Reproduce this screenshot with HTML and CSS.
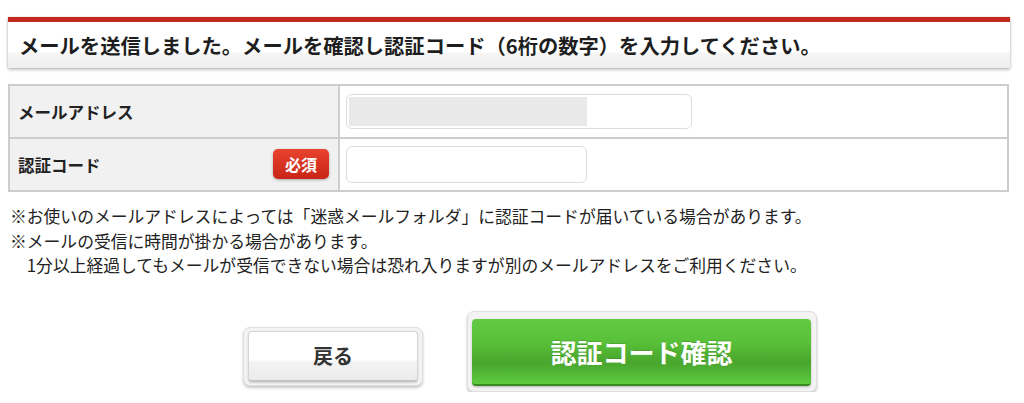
FILE: index.html
```html
<!DOCTYPE html>
<html lang="ja">
<head>
<meta charset="utf-8">
<title>認証コード確認</title>
<link rel="stylesheet" href="styles.css">
</head>
<body>
<div class="page">
  <div class="notice">メールを送信しました。メールを確認し認証コード（6桁の数字）を入力してください。</div>

  <table class="form">
    <tr class="row">
      <th class="label-cell"><div class="label"><span>メールアドレス</span></div></th>
      <td class="field-cell"><div class="input input-email"><span class="masked"></span></div></td>
    </tr>
    <tr class="row">
      <th class="label-cell"><div class="label"><span>認証コード</span><span class="badge">必須</span></div></th>
      <td class="field-cell"><div class="input input-code"></div></td>
    </tr>
  </table>

  <div class="notes">
    <p>※お使いのメールアドレスによっては「迷惑メールフォルダ」に認証コードが届いている場合があります。</p>
    <p>※メールの受信に時間が掛かる場合があります。</p>
    <p>　1分以上経過してもメールが受信できない場合は恐れ入りますが別のメールアドレスをご利用ください。</p>
  </div>

  <div class="actions">
    <div class="frame frame-back"><div class="btn btn-back">戻る</div></div>
    <div class="frame frame-primary"><div class="btn btn-primary">認証コード確認</div></div>
  </div>
</div>
</body>
</html>
```

FILE: styles.css
```css
* { box-sizing: border-box; }

html, body {
  margin: 0;
  padding: 0;
  background: #fff;
}

body {
  font-family: "Noto Sans CJK JP", "Noto Sans", sans-serif;
  color: #222;
}

.page {
  width: 1002px;
  margin-left: 8px;
  padding-top: 17px;
}

.notice {
  border-top: 5px solid #c4271d;
  height: 51px;
  padding-left: 11px;
  font-size: 20.3px;
  font-weight: 700;
  line-height: 46px;
  color: #1e1e1e;
  background: linear-gradient(to bottom, #fff 0%, #fff 66%, #f5f5f5 67%, #efefef 100%);
  box-shadow: 0 2px 3px rgba(0, 0, 0, 0.22), 1px 0 2px rgba(0, 0, 0, 0.08), -1px 0 2px rgba(0, 0, 0, 0.08);
  white-space: nowrap;
}

.form {
  margin-top: 16px;
  width: 1001px;
  border-collapse: collapse;
  border: 2px solid #cdcdcd;
}

.row th, .row td {
  border: 2px solid #cdcdcd;
  height: 53px;
  padding: 0;
}

.label-cell {
  width: 330px;
  background: #f1f1f1;
  text-align: left;
  padding: 0 9px 0 8px !important;
}

.label {
  display: flex;
  align-items: center;
  justify-content: space-between;
  font-size: 16.5px;
  font-weight: 700;
  color: #222;
}

.badge {
  display: flex;
  align-items: center;
  justify-content: center;
  width: 56px;
  height: 30px;
  border-radius: 5px;
  background: linear-gradient(to bottom, #e8442f 0%, #d83322 50%, #c82618 100%);
  color: #fff;
  font-size: 16px;
  font-weight: 700;
  box-shadow: 0 1px 3px rgba(0, 0, 0, 0.3);
  margin-top: -2px;
}

.field-cell {
  padding: 0 0 0 6px !important;
  background: #fff;
}

.input {
  border: 1px solid #dcdcdc;
  border-radius: 6px;
  background: #fff;
  padding: 2px;
}

.input-email {
  width: 346px;
  height: 35px;
}

.masked {
  display: block;
  width: 238px;
  height: 29px;
  background: #e9e9e9;
}

.input-code {
  width: 241px;
  height: 37px;
}

.notes {
  margin-top: 12px;
  padding-left: 2px;
  font-size: 16.8px;
  line-height: 24.5px;
  color: #222;
}

.notes p {
  margin: 0;
  white-space: nowrap;
}

.actions {
  display: flex;
  align-items: flex-start;
  gap: 44px;
  margin-top: 33px;
  padding-left: 235px;
}

.frame {
  background: #f3f3f3;
  border: 1px solid #dedede;
  border-radius: 7px;
  box-shadow: 0 2px 3px rgba(0, 0, 0, 0.22);
}

.frame-back {
  margin-top: 16px;
  width: 180px;
  height: 59px;
  padding: 3px 4px 3px 4px;
}

.frame-primary {
  width: 350px;
  height: 81px;
  padding: 7px 5px 5px 4px;
}

.btn {
  display: flex;
  align-items: center;
  justify-content: center;
  width: 100%;
  height: 100%;
  border-radius: 4px;
  font-weight: 700;
}

.btn-back {
  font-size: 20px;
  color: #333;
  background: linear-gradient(to bottom, #ffffff 0%, #ffffff 58%, #f3f3f3 62%, #ebebeb 100%);
  border: 1px solid #d4d4d4;
  border-bottom: 2px solid #c4c4c4;
  box-shadow: 0 1px 2px rgba(0, 0, 0, 0.15);
}

.btn-primary {
  font-size: 26px;
  color: #fff;
  background: linear-gradient(to bottom, #63c943 0%, #58c139 35%, #4faf31 55%, #49a62e 68%, #55bd37 88%, #5ecb3e 100%);
  border-bottom: 2px solid #3b8a24;
  text-shadow: 0 -1px 0 rgba(0, 0, 0, 0.15);
  box-shadow: 0 1px 2px rgba(0, 0, 0, 0.25);
}
```
